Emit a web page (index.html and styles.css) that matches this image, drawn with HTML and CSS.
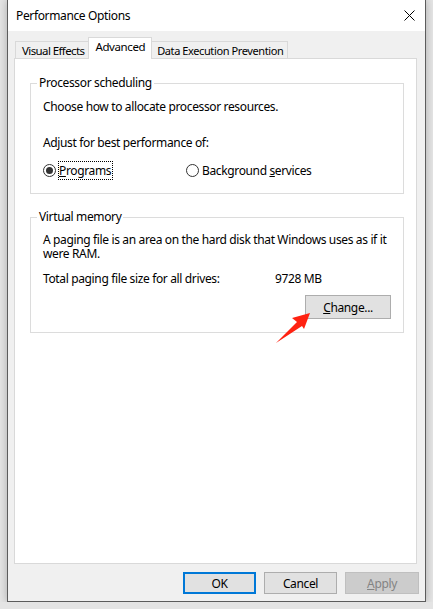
FILE: index.html
```html
<!DOCTYPE html>
<html lang="en">
<head>
  <meta charset="UTF-8">
  <link rel="stylesheet" href="styles.css">
  <title>Performance Options</title>
</head>
<body>

<div class="window">
  <div class="titlebar">
    <span class="title">Performance Options</span>
    <svg class="close" width="11" height="11" viewBox="0 0 11 11">
      <path d="M0.5 0.5 L10.5 10.5 M10.5 0.5 L0.5 10.5" stroke="#000" stroke-width="1" fill="none"/>
    </svg>
  </div>

  <div class="content">
    <div class="tabs">
      <div class="tab">Visual Effects</div>
      <div class="tab active">Advanced</div>
      <div class="tab long">Data Execution Prevention</div>
    </div>

    <div class="panel">
      <fieldset class="group">
        <legend>Processor scheduling</legend>
        <p class="line">Choose how to allocate processor resources.</p>
        <p class="line adjust">Adjust for best performance of:</p>
        <div class="radios">
          <label class="radio">
            <span class="dot checked"></span>
            <span class="focus"><u>P</u>rograms</span>
          </label>
          <label class="radio">
            <span class="dot"></span>
            <span>Background <u>s</u>ervices</span>
          </label>
        </div>
      </fieldset>

      <fieldset class="group">
        <legend>Virtual memory</legend>
        <p class="para">A paging file is an area on the hard disk that Windows uses as if it were RAM.</p>
        <div class="total">
          <span>Total paging file size for all drives:</span>
          <span>9728 MB</span>
        </div>
        <div class="change-row">
          <button class="btn change"><u>C</u>hange...</button>
        </div>
      </fieldset>
    </div>

    <div class="buttons">
      <button class="btn default">OK</button>
      <button class="btn">Cancel</button>
      <button class="btn disabled"><u>A</u>pply</button>
    </div>
  </div>

  <!-- red pointer drawn over the dialog -->
  <svg class="arrow" width="45" height="42" viewBox="0 0 45 42">
    <polygon points="39,8 21,13 26,17 5,38 31,21 33,24" fill="#ff2211"/>
  </svg>
</div>

</body>
</html>
```

FILE: styles.css
```css
* {
  box-sizing: border-box;
}

body {
  margin: 0;
  background: #e4e4e4;
  font-family: 'Noto Sans', 'Open Sans', sans-serif;
  font-size: 12px;
  letter-spacing: -0.36px;
  color: #000;
}

.window {
  position: relative;
  margin-left: 7px;
  width: 419px;
  height: 602px;
  border: 1px solid #5c5c5c;
  border-top: none;
  background: #f0f0f0;
  box-shadow: 0 0 8px rgba(0, 0, 0, 0.25);
}

.titlebar {
  height: 31px;
  background: #fff;
  display: flex;
  align-items: center;
  justify-content: space-between;
  padding: 0 10px 1px 8px;
}

.content {
  padding: 6px 8px 0 6px;
}

/* tab strip */
.tabs {
  display: flex;
  align-items: flex-end;
  height: 21px;
  padding-left: 1px;
}

.tab {
  height: 17px;
  line-height: 17px;
  padding: 0 4px 0 6px;
  border: 1px solid #d9d9d9;
  border-bottom: none;
  background: #f0f0f0;
  margin-right: -1px;
  font-size: 11.5px;
  letter-spacing: -0.6px;
}

.tab.long {
  font-size: 11px;
  letter-spacing: -0.4px;
  padding: 0 4px 0 5px;
}

.tab.active {
  position: relative;
  height: 22px;
  line-height: 18px;
  background: #fff;
  padding: 0 6px;
  z-index: 1;
  margin-bottom: -1px;
  letter-spacing: -0.4px;
}

.panel {
  height: 506px;
  border: 1px solid #d9d9d9;
  background: #fff;
  padding: 16px 12px 0 15px;
}

.group {
  margin: 0 0 15px 0;
  padding: 8px 12px 16px 12px;
  border: 1px solid #dcdcdc;
}

.group legend {
  padding: 0 2px;
  margin-left: -6px;
  line-height: 16px;
}

.line {
  margin: 0;
  line-height: 15px;
}

.adjust {
  margin-top: 21px;
}

.radios {
  display: grid;
  grid-template-columns: 143px auto;
  margin-top: 12px;
  height: 15px;
  align-items: center;
}

.radio {
  display: flex;
  align-items: center;
  gap: 3px;
}

.dot {
  width: 13px;
  height: 13px;
  border: 1px solid #333;
  border-radius: 50%;
  position: relative;
  background: #fff;
}

.dot.checked::after {
  content: '';
  position: absolute;
  top: 2px;
  left: 2px;
  width: 7px;
  height: 7px;
  border-radius: 50%;
  background: #333;
}

.focus {
  outline: 1px dotted #000;
  outline-offset: 0;
  padding: 0 1px 0 0;
}

.para {
  margin: 0;
  line-height: 14px;
}

.group:last-child {
  padding-top: 8px;
  padding-bottom: 13px;
}

.total {
  display: grid;
  grid-template-columns: 232px auto;
  margin-top: 11px;
  line-height: 14px;
}

.change-row {
  display: flex;
  justify-content: flex-end;
  margin-top: 9px;
}

.btn {
  font-family: inherit;
  font-size: 12px;
  letter-spacing: -0.36px;
  height: 22px;
  width: 73px;
  background: #e1e1e1;
  border: 1px solid #adadad;
  color: #000;
  padding: 0;
}

.change {
  width: 86px;
  height: 24px;
}

.buttons {
  display: flex;
  justify-content: flex-end;
  gap: 8px;
  padding-top: 8px;
  margin-right: -2px;
}

.btn.default {
  border: 2px solid #0078d7;
}

.btn.disabled {
  width: 74px;
  background: #cccccc;
  border-color: #bfbfbf;
  color: #838383;
}

.arrow {
  position: absolute;
  left: 263px;
  top: 305px;
}
```
